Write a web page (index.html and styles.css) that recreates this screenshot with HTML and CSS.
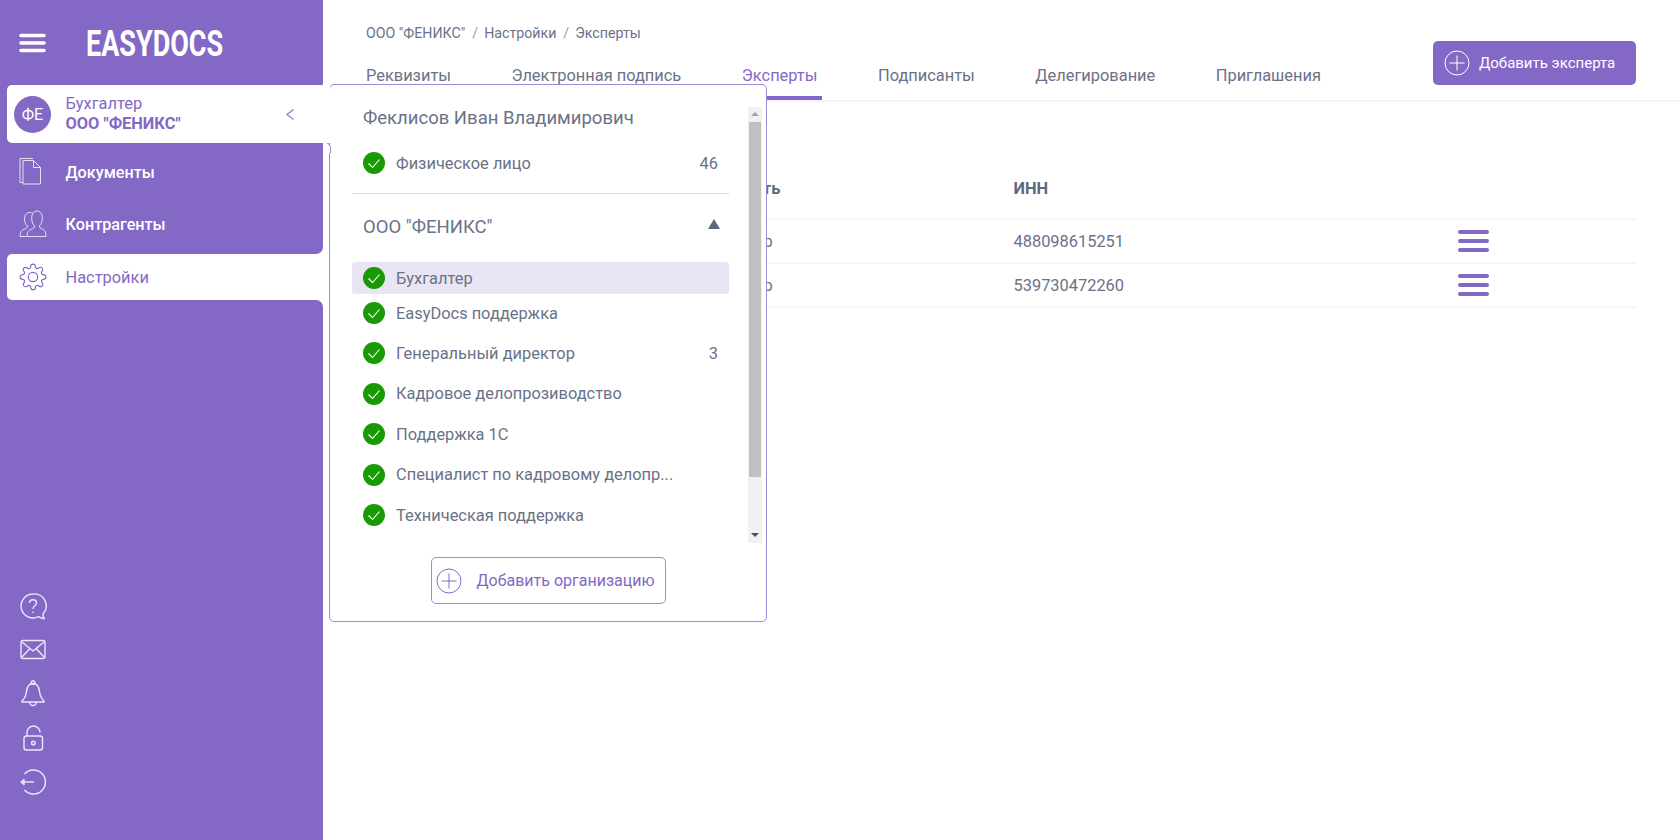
FILE: index.html
```html
<!DOCTYPE html>
<html lang="ru">
<head>
<meta charset="utf-8">
<title>EasyDocs</title>
<link rel="stylesheet" href="styles.css">
</head>
<body>
<div class="app">
  <aside class="sidebar">
    <div class="side-top">
      <div class="brand">
        <svg class="burger" viewBox="0 0 27 20"><path d="M2 2.500h23M2 10h23M2 17.500h23"/></svg>
        <span class="logo">EASYDOCS</span>
      </div>
      <div class="account">
        <span class="avatar">ФЕ</span>
        <span class="account-text"><span class="account-role">Бухгалтер</span><b class="account-org">ООО "ФЕНИКС"</b></span>
        <svg class="chevron" viewBox="0 0 10 13"><path d="M8.500 1.500 2 6.500l6.500 5"/></svg>
      </div>
    </div>
    <nav class="side-nav">
      <a class="nav-item">
        <svg class="nav-icon" viewBox="0 0 28 28"><path d="M14 .5H1v24h3"/><path d="M4 2.500h10.500l7 7V26H4z"/><path d="M14.500 2.500v7h7"/></svg>
        <span>Документы</span>
      </a>
      <a class="nav-item">
        <svg class="nav-icon" viewBox="0 0 28 28"><path d="M8.500 26.500H1c0-4 1-6 4-7.200 2.500-1 3.500-1.800 3.500-3.300-1.800-1.500-3-3.800-3-7C5.500 4.500 7.800 2.500 11 2.500c1.200 0 2.300.3 3.100 1"/><path d="M27 26.500H8c0-4 1.200-6 4.200-7.200 2.500-1 3.500-1.800 3.500-3.300-1.800-1.500-3-4-3-8C12.700 3.500 15 1 18 1s5.300 2.500 5.300 7c0 4-1.200 6.500-3 8 0 1.500 1 2.300 3.500 3.300 2.500 1 3.200 3.200 3.200 7.200z"/></svg>
        <span>Контрагенты</span>
      </a>
    </nav>
    <div class="active-wrap">
      <a class="nav-item nav-current">
        <svg class="nav-icon" viewBox="0 0 24 24"><circle cx="12" cy="12" r="4"/><path d="M19.400 15a1.650 1.650 0 0 0 .33 1.820l.06.06a2 2 0 0 1 0 2.830 2 2 0 0 1-2.830 0l-.06-.06a1.650 1.650 0 0 0-1.820-.33 1.650 1.650 0 0 0-1 1.510V21a2 2 0 0 1-2 2 2 2 0 0 1-2-2v-.09A1.650 1.650 0 0 0 9 19.400a1.650 1.650 0 0 0-1.820.33l-.06.06a2 2 0 0 1-2.830 0 2 2 0 0 1 0-2.830l.06-.06a1.650 1.650 0 0 0 .33-1.820 1.650 1.650 0 0 0-1.510-1H3a2 2 0 0 1-2-2 2 2 0 0 1 2-2h.09A1.650 1.650 0 0 0 4.600 9a1.650 1.650 0 0 0-.33-1.820l-.06-.06a2 2 0 0 1 0-2.830 2 2 0 0 1 2.830 0l.06.06a1.650 1.650 0 0 0 1.820.33H9a1.650 1.650 0 0 0 1-1.510V3a2 2 0 0 1 2-2 2 2 0 0 1 2 2v.09a1.650 1.650 0 0 0 1 1.510 1.650 1.650 0 0 0 1.820-.33l.06-.06a2 2 0 0 1 2.830 0 2 2 0 0 1 0 2.830l-.06.06a1.650 1.650 0 0 0-.33 1.820V9a1.650 1.650 0 0 0 1.510 1H21a2 2 0 0 1 2 2 2 2 0 0 1-2 2h-.09a1.650 1.650 0 0 0-1.510 1z"/></svg>
        <span>Настройки</span>
      </a>
    </div>
    <div class="side-bottom">
      <svg class="tool" viewBox="0 0 28 28"><path d="M14 2a12 12 0 1 0 5.500 22.700c1.800 1.100 4 2 6 1.800-1-1-1.500-2.500-1.600-4.300A12 12 0 0 0 14 2z"/><path d="M10.500 11c0-2 1.500-3.300 3.500-3.300s3.500 1.300 3.500 3.200c0 3-3.500 2.800-3.500 6"/><path d="M14 19.500v1.500"/></svg>
      <svg class="tool" viewBox="0 0 28 28"><rect x="2" y="4.500" width="24" height="18" rx="2"/><path d="M3 6l11 9 11-9M3 21l8-8.500M25 21l-8-8.500"/></svg>
      <svg class="tool" viewBox="0 0 28 28"><path d="M14 3.500c-4.500 0-6 3.500-6.500 8-.5 5-2.500 7.500-4.500 9.500v1h22v-1c-2-2-4-4.500-4.500-9.500-.5-4.500-2-8-6.500-8z"/><circle cx="14" cy="2.500" r="1.800"/><path d="M10.500 22a3.500 3.500 0 0 0 7 0"/></svg>
      <svg class="tool" viewBox="0 0 28 28"><path d="M8 12V8.500a6.500 6.500 0 0 1 13 0"/><rect x="5" y="12" width="18.500" height="14" rx="2.500"/><circle cx="14.300" cy="19" r="1.800"/></svg>
      <svg class="tool" viewBox="0 0 28 28"><path d="M5.500 6A12 12 0 1 1 5.500 22"/><path d="M15 14H3"/><path d="M5 11.500 2 14l3 2.500z"/></svg>
    </div>
  </aside>

  <main class="main">
    <header class="topbar">
      <div class="topbar-left">
        <div class="crumbs"><span>ООО "ФЕНИКС"</span><i>/</i><span>Настройки</span><i>/</i><span>Эксперты</span></div>
        <div class="tabs">
          <a class="tab">Реквизиты</a>
          <a class="tab">Электронная подпись</a>
          <a class="tab tab-active">Эксперты</a>
          <a class="tab">Подписанты</a>
          <a class="tab">Делегирование</a>
          <a class="tab">Приглашения</a>
        </div>
      </div>
      <button class="primary-btn">
        <svg class="plus" viewBox="0 0 26 26"><circle cx="13" cy="13" r="12"/><path d="M13 5.500v15M5.500 13h15"/></svg>
        <span>Добавить эксперта</span>
      </button>
    </header>
    <section class="table">
      <div class="t-row t-head"><span></span><span class="t-shift">Должность</span><span>ИНН</span><span></span></div>
      <div class="t-row"><span></span><span>Бухгалтер</span><span>488098615251</span><svg class="row-menu" viewBox="0 0 31 22"><path d="M2 2h27M2 11h27M2 20h27"/></svg></div>
      <div class="t-row"><span></span><span>Бухгалтер</span><span>539730472260</span><svg class="row-menu" viewBox="0 0 31 22"><path d="M2 2h27M2 11h27M2 20h27"/></svg></div>
    </section>
  </main>

  <div class="popup">
    <div class="popup-body">
      <div class="popup-list">
        <div class="p-title">Феклисов Иван Владимирович</div>
        <div class="p-row p-first"><svg class="ok" viewBox="0 0 22 22"><circle cx="11" cy="11" r="11"/><path d="M5.500 11.500l4 4 7-8"/></svg><span class="p-label">Физическое лицо</span><span class="p-count">46</span></div>
        <div class="p-divider"></div>
        <div class="p-org"><span>ООО "ФЕНИКС"</span><i class="tri"></i></div>
        <div class="p-row p-selected"><svg class="ok" viewBox="0 0 22 22"><circle cx="11" cy="11" r="11"/><path d="M5.500 11.500l4 4 7-8"/></svg><span class="p-label">Бухгалтер</span></div>
        <div class="p-row p-short"><svg class="ok" viewBox="0 0 22 22"><circle cx="11" cy="11" r="11"/><path d="M5.500 11.500l4 4 7-8"/></svg><span class="p-label">EasyDocs поддержка</span></div>
        <div class="p-row"><svg class="ok" viewBox="0 0 22 22"><circle cx="11" cy="11" r="11"/><path d="M5.500 11.500l4 4 7-8"/></svg><span class="p-label">Генеральный директор</span><span class="p-count">3</span></div>
        <div class="p-row"><svg class="ok" viewBox="0 0 22 22"><circle cx="11" cy="11" r="11"/><path d="M5.500 11.500l4 4 7-8"/></svg><span class="p-label">Кадровое делопрозиводство</span></div>
        <div class="p-row"><svg class="ok" viewBox="0 0 22 22"><circle cx="11" cy="11" r="11"/><path d="M5.500 11.500l4 4 7-8"/></svg><span class="p-label">Поддержка 1С</span></div>
        <div class="p-row"><svg class="ok" viewBox="0 0 22 22"><circle cx="11" cy="11" r="11"/><path d="M5.500 11.500l4 4 7-8"/></svg><span class="p-label">Специалист по кадровому делопр...</span></div>
        <div class="p-row"><svg class="ok" viewBox="0 0 22 22"><circle cx="11" cy="11" r="11"/><path d="M5.500 11.500l4 4 7-8"/></svg><span class="p-label">Техническая поддержка</span></div>
      </div>
      <div class="scrollbar"><i class="arrow-up"></i><div class="thumb"></div><i class="arrow-down"></i></div>
    </div>
    <button class="add-org">
      <svg class="plus" viewBox="0 0 26 26"><circle cx="13" cy="13" r="12"/><path d="M13 5.500v15M5.500 13h15"/></svg>
      <span>Добавить организацию</span>
    </button>
  </div>
</div>
</body>
</html>
```
FILE: styles.css
```css
* { box-sizing: border-box; }
html, body { margin: 0; padding: 0; height: 100%; }
body { font-family: Roboto, "Noto Sans", sans-serif; font-size: 16.400px; color: #6a7287; background: #fff; overflow: hidden; }
svg { display: block; fill: none; flex: none; }
button { font: inherit; cursor: pointer; }
i { font-style: normal; }

.app { position: relative; display: flex; width: 1680px; height: 840px; }

/* Sidebar */
.sidebar { width: 323px; flex: none; display: flex; flex-direction: column; background: #fff; }
.side-top { background: #8468c6; height: 143px; padding-top: 24px; }
.brand { display: flex; align-items: center; height: 37px; padding-left: 19px; margin-bottom: 24px; }
.burger { width: 27px; height: 20px; stroke: #fff; stroke-width: 3.600; stroke-linecap: round; }
.logo { font-weight: 700; font-size: 37px; line-height: 37px; color: #fff; margin-left: 40px; position: relative; top: .5px; transform: scaleX(.73); transform-origin: left center; }
.account { position: relative; z-index: 3; display: flex; align-items: center; width: 323px; height: 58px; margin-left: 7px; padding-left: 7px; background: #fff; border-radius: 5px 0 0 5px; }
.avatar { width: 37px; height: 37px; border-radius: 50%; background: #8468c6; color: #fff; font-size: 16px; display: flex; align-items: center; justify-content: center; flex: none; }
.account-text { display: flex; flex-direction: column; margin-left: 14.500px; width: 151px; flex: none; line-height: 20px; color: #8468c6; }
.account-org { font-weight: 700; }
.chevron { width: 10px; height: 13px; margin-left: 68.500px; stroke: #9a84d2; stroke-width: 1.500; }

.side-nav { background: #8468c6; height: 111px; border-bottom-right-radius: 7px; padding-top: 3px; }
.nav-item { display: flex; align-items: center; height: 52px; padding-left: 19px; color: #fff; font-weight: 500; font-size: 16.200px; }
.nav-item span { margin-left: 18.500px; }
.nav-icon { width: 28px; height: 28px; stroke: #e4def5; stroke-width: 1; }
.active-wrap { background: #8468c6; height: 46px; padding-left: 7px; }
.nav-current { height: 46px; padding-left: 12px; background: #fff; color: #8468c6; font-weight: 400; font-size: 16.400px; border-radius: 5px 0 0 5px; }
.nav-current .nav-icon { stroke: #8468c6; }
.side-bottom { flex: 1; background: #8468c6; border-top-right-radius: 7px; display: flex; flex-direction: column; justify-content: flex-end; padding: 0 0 44px 19px; }
.tool { width: 28px; height: 28px; margin-top: 16px; stroke: #ece8f8; stroke-width: 1.400; stroke-linejoin: round; }

/* Main */
.main { flex: 1; min-width: 0; display: flex; flex-direction: column; }
.topbar { display: flex; justify-content: space-between; align-items: flex-start; height: 102px; padding: 0 44px 0 43px; border-bottom: 2px solid #f4f2fa; }
.topbar-left { padding-top: 23px; }
.crumbs { display: flex; height: 20px; line-height: 20px; font-size: 14.200px; }
.crumbs i { margin: 0 6px 0 7px; color: #9aa0ae; }
.tabs { display: flex; margin-top: 23px; gap: 55.500px; }
.tab { height: 34px; line-height: 20px; padding-right: 5px; border-bottom: 4px solid transparent; white-space: nowrap; }
.tab-active { color: #8468c6; border-bottom-color: #8468c6; }
.primary-btn { display: flex; align-items: center; width: 203px; height: 44px; margin-top: 41px; padding: 0 0 0 11px; border: 0; border-radius: 5px; background: #8468c6; color: #fff; font-size: 15px; }
.plus { width: 26px; height: 26px; stroke: currentColor; stroke-width: 1; }
.primary-btn span { margin-left: 9px; }

.table { margin: 55px 43px 0 43px; }
.t-row { display: grid; grid-template-columns: 330px 317.500px 444.500px 1fr; align-items: center; height: 44px; border-bottom: 2px solid #f6f5fb; }
.t-head { height: 63px; padding-top: 2px; font-weight: 700; color: #5d6880; }
.t-shift { margin-left: -5px; }
.row-menu { width: 31px; height: 22px; stroke: #8468c6; stroke-width: 4; stroke-linecap: round; }

/* Popup */
.popup { position: absolute; left: 329px; top: 84px; z-index: 2; width: 438px; height: 538px; background: #fff; border: 1px solid #a08ad8; border-radius: 5px; padding: 22px 4px 0 22px; }
.popup::before { content: ""; position: absolute; left: -7px; top: 57px; width: 7px; height: 10px; background: #fff; border-top: 1px solid #a08ad8; border-right: 1px solid #a08ad8; border-top-right-radius: 6px; }
.popup-body { display: flex; justify-content: space-between; height: 436px; }
.popup-list { width: 377px; overflow: hidden; }
.p-title { height: 22px; line-height: 22px; font-size: 18.500px; padding-left: 11px; }
.p-row { display: flex; align-items: center; height: 40.500px; padding: 0 11px; }
.p-first { height: 40px; margin-top: 14px; }
.ok { width: 22px; height: 22px; }
.ok circle { fill: #189a05; }
.ok path { stroke: #fff; stroke-width: 1.100; }
.p-label { margin-left: 11px; flex: 1; white-space: nowrap; }
.p-divider { height: 1px; background: #dcd6ee; margin-top: 10px; }
.p-org { display: flex; justify-content: space-between; align-items: center; height: 24px; margin: 21px 0 23px; padding: 0 9px 0 11px; font-size: 18.500px; }
.tri { width: 0; height: 0; border-left: 6px solid transparent; border-right: 6px solid transparent; border-bottom: 10px solid #5a6b80; margin-top: -6px; }
.p-selected { height: 32px; background: #e9e5f4; border-radius: 3px; }
.p-short { height: 38.500px; margin-bottom: .5px; }

.scrollbar { width: 14px; height: 436px; background: #f1f1f1; display: flex; flex-direction: column; align-items: center; }
.arrow-up { width: 0; height: 0; margin-top: 5px; border-left: 4px solid transparent; border-right: 4px solid transparent; border-bottom: 4px solid #a3a3a3; }
.thumb { width: 12px; height: 355px; margin-top: 6px; background: #c1c1c1; }
.arrow-down { width: 0; height: 0; margin-top: 56px; border-left: 4px solid transparent; border-right: 4px solid transparent; border-top: 4px solid #505050; }

.add-org { display: flex; align-items: center; width: 235.500px; height: 47px; margin: 14px 0 0 78.500px; padding: 0 0 0 4.500px; border: 1px solid #a08ad8; border-radius: 5px; background: #fff; color: #8468c6; font-size: 16px; }
.add-org span { margin-left: 14.500px; white-space: nowrap; }
```
